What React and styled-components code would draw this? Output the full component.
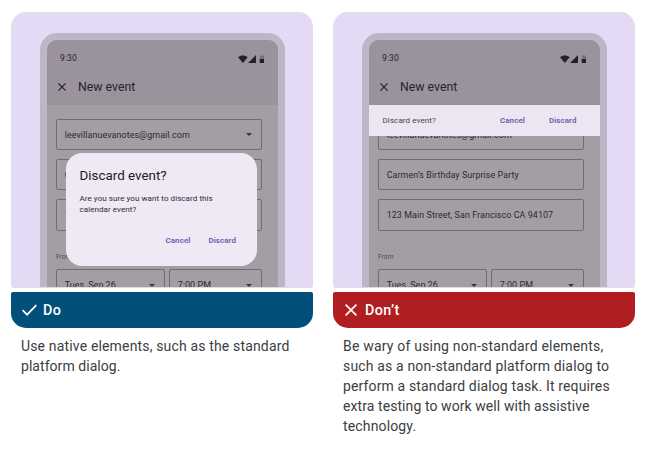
import React from 'react';
import styled, { createGlobalStyle } from 'styled-components';

const GlobalStyle = createGlobalStyle`
  * { box-sizing: border-box; }
  body { margin: 0; background: #fff; font-family: Roboto, "Liberation Sans", sans-serif; }
`;

const Page = styled.main`
  display: grid;
  grid-template-columns: 302px 302px;
  column-gap: 20px;
  padding: 12px 0 0 11px;
`;

const Example = styled.section`
  display: flex;
  flex-direction: column;
`;

const Stage = styled.div`
  height: 276px;
  padding: 20px 0 0 27.5px;
  overflow: hidden;
  background: #e4daf5;
  border: 1px solid #dfdde3;
  border-left-color: #e2dcec;
  border-radius: 15px 15px 3px 3px;
`;

const Phone = styled.div`
  width: 245.5px;
  height: 300px;
  padding: 7px 7.5px 0;
  background: #beb5c6;
  border-radius: 17px 17px 0 0;
`;

const Screen = styled.div`
  position: relative;
  height: 100%;
  background: #a49ea4;
  border-radius: 10px 10px 0 0;
  overflow: hidden;
`;

const Header = styled.header`
  height: 65px;
  background: #9a939e;
  color: #26232a;
`;

const StatusBar = styled.div`
  display: flex;
  align-items: center;
  justify-content: space-between;
  height: 35px;
  padding: 0 13px;
  font-size: 8.5px;
  font-weight: 400;
  letter-spacing: 0.1px;
`;

const StatusIcons = styled.svg`
  width: 27px;
  height: 9px;
  margin-top: 3px;
`;

const AppBar = styled.div`
  display: flex;
  align-items: center;
  height: 24px;
  padding-left: 11px;
  gap: 12px;
  font-size: 12.3px;
  line-height: 24px;
`;

const CloseIcon = styled.svg`
  width: 8px;
  height: 8px;
  fill: none;
  stroke: currentColor;
  stroke-width: 1.2;
`;

const Form = styled.div`
  display: flex;
  flex-direction: column;
  padding: 14px 15.5px 0 9px;
`;

const Field = styled.div`
  display: flex;
  flex: 1 0 auto;
  align-items: center;
  justify-content: space-between;
  height: ${({ $tall }) => ($tall ? 32 : 31)}px;
  margin-bottom: 9px;
  padding: 0 9px 0 7.7px;
  border: 1px solid #716b73;
  border-radius: 2px;
  color: #2c2930;
  font-size: 8.93px;
  letter-spacing: 0.07px;
  white-space: nowrap;
`;

const Caret = styled.svg`
  width: 6px;
  height: 3px;
  fill: #3a363d;
`;

const FieldLabel = styled.div`
  margin: 12px 0 6px;
  color: #4d4850;
  font-size: 6.7px;
  line-height: 11px;
`;

const DateRow = styled.div`
  display: grid;
  grid-template-columns: 109px 93px;
  gap: 4px;
`;

const Dialog = styled.div`
  position: absolute;
  top: 113px;
  left: 19px;
  display: flex;
  flex-direction: column;
  width: 191px;
  height: 113px;
  padding: 14px 21px 0 13.5px;
  background: #efe8f5;
  border-radius: 16px;
  color: #222026;
`;

const DialogTitle = styled.h2`
  margin: 0;
  font-size: 13.4px;
  font-weight: 400;
  line-height: 17px;
`;

const DialogText = styled.p`
  margin: 9px 0 0;
  color: #2e2a32;
  font-size: 8px;
  line-height: 11px;
  letter-spacing: 0.07px;
`;

const DialogActions = styled.div`
  display: flex;
  justify-content: flex-end;
  gap: 18px;
  margin-top: 20px;
`;

const Snackbar = styled.div`
  position: absolute;
  top: 65px;
  left: 0;
  right: 0;
  display: flex;
  align-items: center;
  height: 31px;
  padding: 0 23px 0 13.5px;
  background: #ece5f2;
`;

const SnackbarText = styled.span`
  margin-right: auto;
  color: #49444d;
  font-size: 8px;
  letter-spacing: 0.1px;
`;

const SnackbarActions = styled.div`
  display: flex;
  gap: 24px;
`;

const TextButton = styled.button`
  padding: 0;
  border: 0;
  background: none;
  color: #7159ac;
  font: 600 8px/12px Roboto, "Liberation Sans", sans-serif;
  letter-spacing: 0.06px;
`;

const Verdict = styled.div`
  display: flex;
  align-items: center;
  gap: ${({ $gap }) => $gap}px;
  height: 36px;
  margin-top: 4px;
  padding-left: ${({ $inset }) => $inset}px;
  background: ${({ $tone }) => $tone};
  border-radius: 2px 2px 15px 15px;
  color: #fff;
  font-size: 14.3px;
  font-weight: 500;
  letter-spacing: 0.4px;
`;

const VerdictIcon = styled.svg`
  width: ${({ $width }) => $width}px;
  height: 12px;
  fill: none;
  stroke: #fff;
  stroke-width: 1.7;
`;

const Caption = styled.p`
  margin: 8px 0 0 10px;
  color: #3c3d3f;
  font-size: 14px;
  line-height: 20px;
`;

const CaptionLine = styled.span`
  display: block;
  letter-spacing: ${({ $tracking }) => $tracking}px;
  white-space: nowrap;
`;

const DropCaret = () => (
  <Caret viewBox="0 0 6 3">
    <path d="M0 0h6L3 3z" />
  </Caret>
);

const EventScreen = ({ children }) => (
  <Stage>
    <Phone>
      <Screen>
        <Header>
          <StatusBar>
            <span>9:30</span>
            <StatusIcons viewBox="0 0 27 9">
              <path d="M0 2.2C2.7-.2 7-.2 9.7 2.2L4.9 8z" fill="#242127" />
              <path d="M18 0v8h-8z" fill="#242127" />
              <path d="M22.2 1H23V.3h2V1h.9v3.2h-3.7z" fill="#736d76" />
              <path d="M21.7 4h4.3v3.5q0 .5-.5.5h-3.3q-.5 0-.5-.5z" fill="#242127" />
            </StatusIcons>
          </StatusBar>
          <AppBar>
            <CloseIcon viewBox="0 0 8 8">
              <path d="M.4.4l7.2 7.2M7.6.4L.4 7.6" />
            </CloseIcon>
            <span>New event</span>
          </AppBar>
        </Header>
        <Form>
          <Field>leevillanuevanotes@gmail.com<DropCaret /></Field>
          <Field>Carmen’s Birthday Surprise Party</Field>
          <Field $tall>123 Main Street, San Francisco CA 94107</Field>
          <FieldLabel>From</FieldLabel>
          <DateRow>
            <Field $tall>Tues, Sep 26<DropCaret /></Field>
            <Field $tall>7:00 PM<DropCaret /></Field>
          </DateRow>
        </Form>
        {children}
      </Screen>
    </Phone>
  </Stage>
);

export default function App() {
  return (
    <>
      <GlobalStyle />
      <Page>
        <Example>
          <EventScreen>
            <Dialog>
              <DialogTitle>Discard event?</DialogTitle>
              <DialogText>
                Are you sure you want to discard this<br />calendar event?
              </DialogText>
              <DialogActions>
                <TextButton>Cancel</TextButton>
                <TextButton>Discard</TextButton>
              </DialogActions>
            </Dialog>
          </EventScreen>
          <Verdict $tone="#00507a" $inset={11} $gap={6}>
            <VerdictIcon $width={15} viewBox="0 0 15 12">
              <path d="M.6 6.1l4.5 4.6L14.3 1.1" />
            </VerdictIcon>
            Do
          </Verdict>
          <Caption>
            <CaptionLine $tracking={0.16}>Use native elements, such as the standard</CaptionLine>
            <CaptionLine $tracking={0.05}>platform dialog.</CaptionLine>
          </Caption>
        </Example>
        <Example>
          <EventScreen>
            <Snackbar>
              <SnackbarText>Discard event?</SnackbarText>
              <SnackbarActions>
                <TextButton>Cancel</TextButton>
                <TextButton>Discard</TextButton>
              </SnackbarActions>
            </Snackbar>
          </EventScreen>
          <Verdict $tone="#b01e22" $inset={12} $gap={8}>
            <VerdictIcon $width={12} viewBox="0 0 12 12">
              <path d="M.6.6l10.8 10.8M11.4.6L.6 11.4" />
            </VerdictIcon>
            Don’t
          </Verdict>
          <Caption>
            <CaptionLine $tracking={0.2}>Be wary of using non-standard elements,</CaptionLine>
            <CaptionLine $tracking={0.16}>such as a non-standard platform dialog to</CaptionLine>
            <CaptionLine $tracking={0.14}>perform a standard dialog task. It requires</CaptionLine>
            <CaptionLine $tracking={0.08}>extra testing to work well with assistive</CaptionLine>
            <CaptionLine $tracking={0.15}>technology.</CaptionLine>
          </Caption>
        </Example>
      </Page>
    </>
  );
}
